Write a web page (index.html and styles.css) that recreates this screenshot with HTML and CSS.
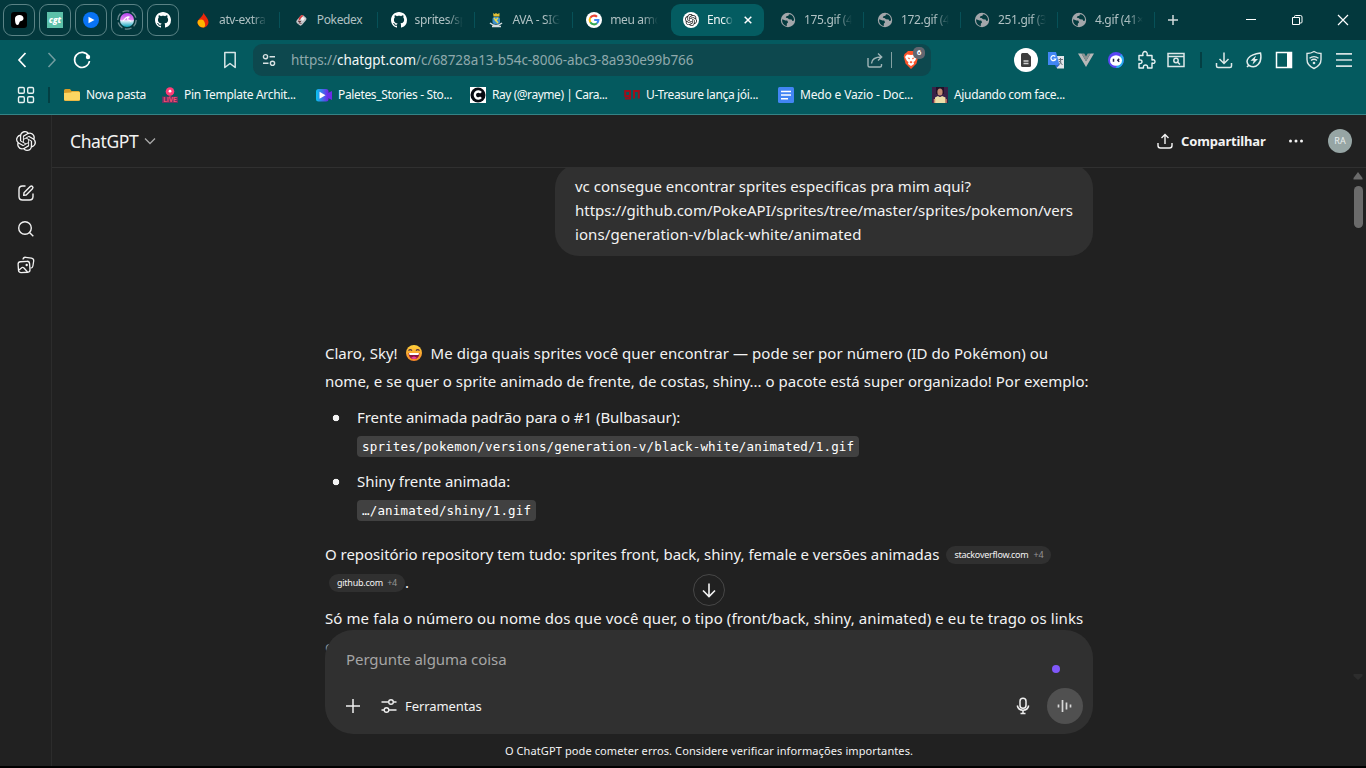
FILE: index.html
```html
<!DOCTYPE html>
<html lang="pt-BR">
<head>
<meta charset="utf-8">
<title>ChatGPT</title>
<link rel="stylesheet" href="styles.css">
</head>
<body>
<svg class="defs" width="0" height="0">
  <symbol id="openai" viewBox="0 0 24 24"><path fill="currentColor" d="M22.2819 9.8211a5.9847 5.9847 0 0 0-.5157-4.9108 6.0462 6.0462 0 0 0-6.5098-2.9A6.0651 6.0651 0 0 0 4.9807 4.1818a5.9847 5.9847 0 0 0-3.9977 2.9 6.0462 6.0462 0 0 0 .7427 7.0966 5.98 5.98 0 0 0 .511 4.9107 6.051 6.051 0 0 0 6.5146 2.9001A5.9847 5.9847 0 0 0 13.2599 24a6.0557 6.0557 0 0 0 5.7718-4.2058 5.9894 5.9894 0 0 0 3.9977-2.9001 6.0557 6.0557 0 0 0-.7475-7.0729zm-9.022 12.6081a4.4755 4.4755 0 0 1-2.8764-1.0408l.1419-.0804 4.7783-2.7582a.7948.7948 0 0 0 .3927-.6813v-6.7369l2.02 1.1686a.071.071 0 0 1 .038.052v5.5826a4.504 4.504 0 0 1-4.4945 4.4944zm-9.6607-4.1254a4.4708 4.4708 0 0 1-.5346-3.0137l.142.0852 4.783 2.7582a.7712.7712 0 0 0 .7806 0l5.8428-3.3685v2.3324a.0804.0804 0 0 1-.0332.0615L9.74 19.9502a4.4992 4.4992 0 0 1-6.1408-1.6464zM2.3408 7.8956a4.485 4.485 0 0 1 2.3655-1.9728V11.6a.7664.7664 0 0 0 .3879.6765l5.8144 3.3543-2.0201 1.1685a.0757.0757 0 0 1-.071 0l-4.8303-2.7865A4.504 4.504 0 0 1 2.3408 7.872zm16.5963 3.8558L13.1038 8.364 15.1192 7.2a.0757.0757 0 0 1 .071 0l4.8303 2.7913a4.4944 4.4944 0 0 1-.6765 8.1042v-5.6772a.79.79 0 0 0-.407-.667zm2.0107-3.0231l-.142-.0852-4.7735-2.7818a.7759.7759 0 0 0-.7854 0L9.409 9.2297V6.8974a.0662.0662 0 0 1 .0284-.0615l4.8303-2.7866a4.4992 4.4992 0 0 1 6.6802 4.66zM8.3065 12.863l-2.02-1.1638a.0804.0804 0 0 1-.038-.0567V6.0742a4.4992 4.4992 0 0 1 7.3757-3.4537l-.142.0805L8.704 5.459a.7948.7948 0 0 0-.3927.6813zm1.0976-2.3654l2.602-1.4998 2.6069 1.4998v2.9994l-2.5974 1.4997-2.6067-1.4997Z"/></symbol>
  <symbol id="github" viewBox="0 0 16 16"><path fill="#fff" d="M8 0C3.58 0 0 3.58 0 8c0 3.54 2.29 6.53 5.47 7.59.4.07.55-.17.55-.38 0-.19-.01-.82-.01-1.49-2.01.37-2.53-.49-2.69-.94-.09-.23-.48-.94-.82-1.13-.28-.15-.68-.52-.01-.53.63-.01 1.08.58 1.23.82.72 1.21 1.87.87 2.33.66.07-.52.28-.87.51-1.07-1.78-.2-3.64-.89-3.64-3.95 0-.87.31-1.59.82-2.15-.08-.2-.36-1.02.08-2.12 0 0 .67-.21 2.2.82.64-.18 1.32-.27 2-.27s1.36.09 2 .27c1.53-1.04 2.2-.82 2.2-.82.44 1.1.16 1.92.08 2.12.51.56.82 1.27.82 2.15 0 3.07-1.87 3.75-3.65 3.95.29.25.54.73.54 1.48 0 1.07-.01 1.93-.01 2.2 0 .21.15.46.55.38A8.01 8.01 0 0 0 16 8c0-4.42-3.58-8-8-8z"/></symbol>
  <symbol id="globe" viewBox="0 0 16 16"><circle cx="8" cy="8" r="7.2" fill="#a3a6aa"/><path fill="#033a3e" d="M2.2 7.2 5.4 8.6l1.8 0 .9 1.7-1.3 1.4 0 2.2C3.8 13.5 1.7 10.600 2.200 7.200zM9 2.200l-.6 1.500-2 .6-.6 1.500 1.700.2 1.500 1.300 2.600.2.8 1.500 1.600-.4C14.400 5.200 12.200 2.400 9 2.200z"/></symbol>
</svg>

<div class="tabstrip">
  <div class="pins">
    <div class="pin"><svg width="16" height="16"><rect width="16" height="16" rx="3" fill="#000"/><path fill="#fff" d="M4 6.500C4 4.500 6 3 8.500 3S12.500 4.500 12.500 6.500 10.500 9 9.300 9.300 8.500 13 6.500 13 4 9.500 4 6.500z"/></svg></div>
    <div class="pin"><span class="cgt">cgt</span></div>
    <div class="pin"><svg width="16" height="16"><circle cx="8" cy="8" r="8" fill="#0873f5"/><path fill="#fff" d="M5.500 4.700v6.600L11.500 8z"/></svg></div>
    <div class="pin"><svg width="20" height="20" viewBox="0 0 20 20"><defs><linearGradient id="orb" x2="0" y2="1"><stop offset="0" stop-color="#b445ef"/><stop offset=".5" stop-color="#e88cf2"/><stop offset=".55" stop-color="#e9f4ff"/><stop offset="1" stop-color="#08a3b8"/></linearGradient></defs><circle cx="10" cy="10" r="9.200" fill="none" stroke="#6d8d92" stroke-width="1.300" stroke-dasharray="7 2.600"/><circle cx="10" cy="10" r="7" fill="url(#orb)"/><path d="M6 11q4-5 6-4-2 1-1 3 2 0 3 1.500" fill="none" stroke="#fff" stroke-width="1.200"/></svg></div>
    <div class="pin"><svg width="16" height="16"><use href="#github"/></svg></div>
  </div>
  <div class="tabs">
    <div class="tab wide"><svg width="16" height="16"><path fill="#e8280b" d="M8.500.5C9 3 13.500 6 13.500 10.200A5.500 5.300 0 0 1 2.500 10.200C2.500 7 8.500 4.500 8.500.5z"/><path fill="#ffb400" d="M3 8.500Q8 6 9.500 10T9 15.500Q4 15.500 2.500 11z"/></svg><span class="t">atv-extra</span></div>
    <div class="tab wide"><svg width="16" height="16"><g transform="rotate(40 8 8)"><rect x="5" y="3" width="7" height="10" rx="2" fill="#c4c5c9"/><path d="M5 5.500q0-2.500 2-2.500v7L5 8z" fill="#d43d3d"/><rect x="7" y="4.500" width="3" height="3" fill="#f4f4f4"/><path d="M6.500 10.500h4M8.500 9v3" stroke="#5a2a30"/></g></svg><span class="t solid">Pokedex</span></div>
    <div class="tab wide"><svg width="16" height="16"><use href="#github"/></svg><span class="t">sprites/sprites</span></div>
    <div class="tab wide"><svg width="16" height="16"><path fill="#e0bd35" d="M5 1l1.500 1L8 1l1.500 1L11.500 1v3.500h-6z"/><rect x="4.500" y="5" width="7.500" height="7" rx="2" fill="#3d91cf"/><path d="M6 6l4 5M10 6 7 9" stroke="#e8da51" stroke-width="1.500"/><path d="M2 11q6 5 12 0M4 14.500h9" fill="none" stroke="#d5dde0" stroke-width="1.500"/></svg><span class="t">AVA - SIGAA</span></div>
    <div class="tab nosep"><svg width="16" height="16"><circle cx="8" cy="8" r="8" fill="#fff"/><g fill="none" stroke-width="2.100"><path stroke="#ea4335" d="M4.300 5.700A4.400 4.400 0 0 1 11 4.800"/><path stroke="#fbbc05" d="M4.300 5.700a4.400 4.400 0 0 0 0 4.600"/><path stroke="#34a853" d="M4.300 10.300A4.400 4.400 0 0 0 11 11.200"/><path stroke="#4285f4" d="M11 11.200A4.400 4.400 0 0 0 12.400 8H8.200"/></g></svg><span class="t">meu amor</span></div>
    <div class="tab active"><span class="oa"><svg width="12" height="12"><use href="#openai"/></svg></span><span class="t">Encontrar</span><svg class="x" width="8" height="8"><path d="M.7.7l6.600 6.600M7.300.7.700 7.300" stroke="#fff" stroke-width="1.500"/></svg></div>
    <div class="tab"><svg width="16" height="16"><use href="#globe"/></svg><span class="t">175.gif (41×)</span></div>
    <div class="tab"><svg width="16" height="16"><use href="#globe"/></svg><span class="t">172.gif (41×)</span></div>
    <div class="tab"><svg width="16" height="16"><use href="#globe"/></svg><span class="t">251.gif (36×)</span></div>
    <div class="tab"><svg width="16" height="16"><use href="#globe"/></svg><span class="t">4.gif (41×42)</span></div>
    <svg class="plus" width="12" height="12"><path d="M6 1v10M1 6h10" stroke="#d3dadb" stroke-width="1.500"/></svg>
  </div>
  <div class="winctl">
    <svg width="12" height="12"><path d="M1 5.500h10" stroke="#fff"/></svg>
    <svg width="12" height="12"><path d="M1.500 3.500h7v7h-7zM3.500 3.500V2.500q0-1 1-1h5q1.500 0 1.500 1.500v5q0 1-1 1H8.500" fill="none" stroke="#fff"/></svg>
    <svg width="12" height="12"><path d="M1 1l10 10M11 1 1 11" stroke="#fff" stroke-width="1.200"/></svg>
  </div>
</div>

<div class="toolbar">
  <div class="nav">
    <svg width="20" height="20"><path d="M13.500 3 7 10l6.500 7" fill="none" stroke="#fff" stroke-width="1.700"/></svg>
    <svg width="20" height="20"><path d="M6.500 3l6.500 7-6.500 7" fill="none" stroke="#729da0" stroke-width="1.500"/></svg>
    <svg width="20" height="20"><path d="M16.500 6A7.500 7.500 0 1 0 17.500 11" fill="none" stroke="#fff" stroke-width="1.600"/><circle cx="16" cy="7" r="2.200" fill="#fff"/></svg>
    <svg class="bm" width="20" height="20"><path d="M4.800 2.500h10.400v15L10 13.500l-5.200 4z" fill="none" stroke="#d9e6e7" stroke-width="1.500" stroke-linejoin="round"/></svg>
  </div>
  <div class="url">
    <svg width="14" height="14"><g fill="none" stroke="#d9e2e3" stroke-width="1.400"><circle cx="3.500" cy="3.700" r="2.100"/><path d="M7.500 3.700H13M1 10.300h5.500"/><circle cx="10.500" cy="10.300" r="2.100"/></g></svg>
    <span class="addr">https://<b>chatgpt.com</b>/c/68728a13-b54c-8006-abc3-8a930e99b766</span>
    <svg class="share" width="16" height="16"><path d="M1 6v7.500q0 1.500 1.500 1.500H13q1.500 0 1.500-1.500V12M4.500 11.500Q5 5 14.500 5M11 1.500 14.700 5 11 8.500" fill="none" stroke="#a0b5b7" stroke-width="1.400"/></svg>
    <i class="vline"></i>
    <span class="brave"><svg width="16" height="18" viewBox="0 0 16 18"><path fill="#fb542b" d="M3.500 1.500 5 0h6l1.500 1.500L14.500 3l.8 2.500-1.800 7L8 18l-5.500-5.500-1.800-7L1.500 3z"/><path fill="#fff" d="M4 3.500 8 4l4-.5L14 6l-2 4-1.500 1L11 13l-3 2-3-2 .5-2L4 10 2 6z"/><path fill="#fb542b" d="M4.500 6.500 7 7l-.8 1.500zM11.500 6.500 9 7l.8 1.500zM8 10l1.500 1L8 12.500 6.500 11z"/></svg><em class="badge">6</em></span>
  </div>
  <div class="exts">
    <svg width="24" height="24"><circle cx="12" cy="12" r="12" fill="#fff"/><path fill="#3d3d3d" d="M8.500 5h5L17 8.500V17.500q0 1.500-1.500 1.500h-7Q7 19 7 17.500v-11Q7 5 8.500 5z"/><path d="M9.500 13h5M9.500 15.500h5" stroke="#cfcfcf" stroke-width="1.400"/></svg>
    <svg width="18" height="18"><path fill="#e2e6ea" d="M8 5h9v12.500H10z"/><path fill="#4286f5" d="M1 1h8l3.500 13H1z"/><path fill="#3169d3" d="M8 14h4.500L9.500 17z"/><path d="M8.300 5.500A2.500 2.500 0 1 0 8.800 8H6.500" fill="none" stroke="#fff" stroke-width="1.200"/><path d="M11.500 8.500h4.500M13.500 7v1.500Q15 12 11.500 14M12 10l3.500 4" stroke="#626d76" fill="none"/></svg>
    <svg width="16" height="16"><path fill="#b8b8b8" d="M0 1.500h3.500L8 9.300l4.500-7.800H16L8 15z"/><path fill="#8c9393" d="M3.500 1.500H6.300L8 4.500l1.700-3h2.800L8 9.300z"/></svg>
    <svg width="16" height="16"><circle cx="8" cy="8" r="8" fill="#5a45f5"/><path fill="#24b1ed" d="M8 16A8 8 0 0 0 13 2z"/><ellipse cx="8" cy="8.500" rx="6" ry="5.300" fill="#fff"/><path d="M5.500 6.800v3M11.200 6.800 9.800 8.300l1.400 1.500" stroke="#24204c" stroke-width="1.500" fill="none"/></svg>
    <svg width="20" height="20"><path d="M3 5.500H7C6 2.500 8 1.500 9 1.500S12 2.500 11 5.500h5v4.500C18.500 9 19 11 19 11.800S18 14 16 13v5H11.500C12 15.500 10.500 15 9.500 15S7 15.500 7.500 18H3V13.500C5.500 14 6 12.500 6 11.700S5.500 9.500 3 10z" fill="none" stroke="#e9f3f3" stroke-width="1.400" stroke-linejoin="round"/></svg>
    <svg width="18" height="18"><path d="M1 2.500h16v13H1zM1 5.500h16" fill="none" stroke="#dce7e8" stroke-width="1.500"/><circle cx="9" cy="9.500" r="2.200" fill="none" stroke="#dce7e8" stroke-width="1.500"/><path d="M10.500 11l2.500 2.500" stroke="#dce7e8" stroke-width="1.500"/></svg>
  </div>
  <i class="dark-sep"></i>
  <div class="tools">
    <svg width="18" height="18"><path d="M9 1.500v10.500M4.500 8 9 12.500 13.500 8M1.500 12v3q0 1.500 1.500 1.500h12q1.500 0 1.500-1.500v-3" fill="none" stroke="#dfe9e9" stroke-width="1.500"/></svg>
    <svg width="18" height="18"><path d="M2 16 4 14M4 14.500C-.5 10 3 3.500 15.500 2 17.500 12 11 18.500 4 14.500z" fill="none" stroke="#e3eded" stroke-width="1.500"/><path fill="#e3eded" d="M11 4.500 5.500 9.700H8.700L7.500 13.500 13 8H9.800z"/></svg>
    <svg width="18" height="18"><path d="M1.500 1.500h15v15h-15z" fill="none" stroke="#fff" stroke-width="1.500"/><path fill="#fff" d="M12 1h5v16h-5z"/></svg>
    <svg width="18" height="20"><path d="M9 1.500q3 2 7 2v6q0 6-7 9-7-3-7-9v-6q4 0 7-2z" fill="none" stroke="#dfe9e9" stroke-width="1.400"/><path d="M4.500 8.300q4.500-3.500 9 0M6 10.500q3-2.500 6 0" fill="none" stroke="#dfe9e9" stroke-width="1.300"/><circle cx="9" cy="13" r="1.300" fill="#dfe9e9"/></svg>
    <svg width="16" height="16"><path d="M0 1.800h16M0 8h16M0 14.200h16" stroke="#d5e1e2" stroke-width="1.700"/></svg>
  </div>
</div>

<div class="bookmarks">
  <svg class="grid" width="18" height="18"><g fill="none" stroke="#e9f2f2" stroke-width="1.400"><rect x="1.500" y="1.500" width="5.800" height="5.800" rx="1.200"/><rect x="10.700" y="1.500" width="5.800" height="5.800" rx="1.200"/><rect x="1.500" y="10.700" width="5.800" height="5.800" rx="1.200"/><rect x="10.700" y="10.700" width="5.800" height="5.800" rx="1.200"/></g></svg>
  <i class="dark-sep"></i>
  <div class="mark first"><svg width="16" height="16"><path fill="#d89c26" d="M0 3.500Q0 2 1.500 2H6L7.500 4H14.500Q16 4 16 5.500V12.500Q16 14 14.500 14h-13Q0 14 0 12.500z"/><path fill="#fdd662" d="M0 6 7 5.500 8 4.800H14.700Q16 5 16 6V12.300Q16 13.500 14.700 13.500H1.300Q0 13.500 0 12.300z"/></svg><span class="b1">Nova pasta</span></div>
  <div class="mark"><svg width="16" height="16"><circle cx="8" cy="4.500" r="4.300" fill="#ff3d77"/><circle cx="8" cy="4.200" r="1.400" fill="#fff"/><path d="M8 9v2" stroke="#e63667" stroke-width="2"/><rect y="9.500" width="16" height="6.500" fill="#673563"/><text x="8" y="15.400" text-anchor="middle" font-family="Roboto" font-size="6.500" font-weight="700" fill="#ff4b6e">LIVE</text></svg><span class="b2">Pin Template Archit...</span></div>
  <div class="mark"><svg width="16" height="16"><defs><linearGradient id="vid"><stop stop-color="#08c5ef"/><stop offset="1" stop-color="#7221e6"/></linearGradient></defs><rect y="2" width="12.500" height="12.500" rx="2.500" fill="url(#vid)"/><path fill="#6b2ce7" d="M12 6l4-2v9l-4-2z"/><path fill="#fff" d="M3.500 4.700v7L9.500 8.200z"/></svg><span class="b3">Paletes_Stories - Sto...</span></div>
  <div class="mark"><svg width="16" height="16"><rect width="16" height="16" fill="#fff"/><circle cx="8" cy="8" r="7.500" fill="#080b12"/><path d="M11 5.700A3.500 3.500 0 1 0 11 10.300" fill="none" stroke="#fff" stroke-width="2.400"/></svg><span class="b4">Ray (@rayme) | Cara...</span></div>
  <div class="mark"><svg width="16" height="16"><path d="M5.500 9H1.200V4H6v7.500H1M10 11.500V4H14.800v7.500" fill="none" stroke="#9c101c" stroke-width="2"/></svg><span class="b5">U-Treasure lança jói...</span></div>
  <div class="mark"><svg width="16" height="16"><rect width="16" height="16" rx="1.500" fill="#4285f4"/><path d="M3 4.500h10M3 8h10M3 11.700h7" stroke="#fff" stroke-width="1.600"/></svg><span class="b6">Medo e Vazio - Doc...</span></div>
  <div class="mark"><svg width="16" height="16"><rect width="16" height="16" fill="#3a2147"/><path fill="#211128" d="M4 0h8v7H4z"/><ellipse cx="8" cy="5" rx="2.600" ry="3.500" fill="#c28c73"/><path fill="#ecdfa9" d="M3 16V10.500L6 9q2 2 4 0l3.500 1.500V16z"/><path d="M2.500 16v-4M14 16v-4" stroke="#cf8b6b" stroke-width="1.500"/></svg><span class="b7">Ajudando com face...</span></div>
</div>

<div class="app">
  <nav class="rail">
    <svg class="logo" width="20" height="20"><use href="#openai"/></svg>
    <svg width="18" height="18"><path d="M8.500 2H5.500Q2 2 2 5.500v7Q2 16 5.500 16h7Q16 16 16 12.500V9.500M6.700 11.300 7 8.800 13.200 2.600Q14.500 1.500 15.500 2.500T15.400 4.800L9.200 11z" fill="none" stroke="#f1f1f1" stroke-width="1.400" stroke-linejoin="round"/></svg>
    <svg width="18" height="18"><circle cx="8" cy="8" r="6.300" fill="none" stroke="#f1f1f1" stroke-width="1.400"/><path d="M12.500 12.500 16.300 16.300" stroke="#f1f1f1" stroke-width="1.400"/></svg>
    <svg width="18" height="18"><g fill="none" stroke="#f1f1f1" stroke-width="1.300"><path d="M6 3.500Q6.400 1 8.700 1.300L14.500 2.200Q17 2.600 16.700 5L15.900 10Q15.600 12 13.500 12.200"/><rect x="1.300" y="5.500" width="11.500" height="11" rx="2.500" transform="rotate(-4 7 11)"/><path d="M2 14 5 11.500Q6 11 7 12L10.500 16"/></g><circle cx="9.700" cy="9" r="1.200" fill="#f1f1f1"/></svg>
  </nav>
  <main class="main">
    <header class="head">
      <span class="title">ChatGPT</span>
      <svg class="chev" width="12" height="12"><path d="M1 3.500l5 5 5-5" fill="none" stroke="#a8a8a8" stroke-width="1.300"/></svg>
      <svg class="up" width="16" height="16"><path d="M8 11V1.500M4.500 5 8 1.500 11.500 5M1 10v2.500Q1 15 3.500 15h9Q15 15 15 12.500V10" fill="none" stroke="#f5f5f5" stroke-width="1.400"/></svg>
      <span class="sharetxt">Compartilhar</span>
      <svg class="dots" width="16" height="16"><g fill="#f3f3f3"><circle cx="2.500" cy="8" r="1.500"/><circle cx="8" cy="8" r="1.500"/><circle cx="13.500" cy="8" r="1.500"/></g></svg>
      <span class="avatar">RA</span>
    </header>
    <div class="scroll">
      <div class="column">
        <div class="bubble"><p class="u1">vc consegue encontrar sprites especificas pra mim aqui?</p><p class="u2">https://github.com/PokeAPI/sprites/tree/master/sprites/pokemon/vers</p><p class="u3">ions/generation-v/black-white/animated</p></div>
        <article class="reply">
          <p class="l1">Claro, Sky! <svg class="emoji" width="18" height="18" viewBox="0 0 18 18"><defs><linearGradient id="face" x2="0" y2="1"><stop stop-color="#ffd13b"/><stop offset="1" stop-color="#f58427"/></linearGradient></defs><circle cx="9" cy="9" r="8" fill="url(#face)"/><path d="M3.500 6.700Q5.200 4.500 7 6.700M11 6.700Q12.700 4.500 14.500 6.700" fill="none" stroke="#533442" stroke-width="1.200"/><path fill="#8b163f" d="M3.500 9h11Q14 15 9 15T3.500 9z"/><path fill="#fff" d="M4 9h10l-.5 2h-9z"/><path fill="#ee3f9b" d="M6 14q3-3 6 0-3 2-6 0z"/></svg> <span class="l1b">Me diga quais sprites você quer encontrar — pode ser por número (ID do Pokémon) ou</span></p>
          <p class="l2">nome, e se quer o sprite animado de frente, de costas, shiny... o pacote está super organizado! Por exemplo:</p>
          <ul>
            <li><span class="l3">Frente animada padrão para o #1 (Bulbasaur):</span><div class="cl"><code>sprites/pokemon/versions/generation-v/black-white/animated/1.gif</code></div></li>
            <li><span class="l4">Shiny frente animada:</span><div class="cl"><code>…/animated/shiny/1.gif</code></div></li>
          </ul>
          <div class="row"><span class="l5">O repositório repository tem tudo: sprites front, back, shiny, female e versões animadas</span><span class="cite c1"><span>stackoverflow.com</span><i>+4</i></span></div>
          <div class="row second"><span class="cite c2"><span>github.com</span><i>+4</i></span><span>.</span></div>
          <p class="l6">Só me fala o número ou nome dos que você quer, o tipo (front/back, shiny, animated) e eu te trago os links</p>
          <p class="l7">c</p>
        </article>
      </div>
      <div class="bar"><svg width="10" height="8"><path fill="#6b6b6b" d="M5 0l4.500 6v1.500h-9V6z"/></svg><i class="thumb"></i><svg class="downtri" width="10" height="8"><path fill="#2d2d2d" d="M5 7 .5 3V1h9v2z"/></svg></div>
      <div class="godown"><svg width="16" height="16"><path d="M8 1.500v13M2 8.500l6 6 6-6" fill="none" stroke="#f5f5f5" stroke-width="1.600"/></svg></div>
      <footer class="dock">
        <div class="composer">
          <div class="ask">Pergunte alguma coisa</div>
          <i class="purple"></i>
          <div class="acts">
            <svg width="16" height="16"><path d="M8 1v14M1 8h14" stroke="#eee" stroke-width="1.500"/></svg>
            <svg class="sl" width="16" height="16"><g fill="none" stroke="#eee" stroke-width="1.400"><path d="M.5 4h7M12.500 4h3M.5 12h2.500M8 12h7.500"/><circle cx="10" cy="4" r="2.300"/><circle cx="5.500" cy="12" r="2.300"/></g></svg>
            <span class="ferr">Ferramentas</span>
            <svg class="mic" width="16" height="18"><g fill="none" stroke="#eee" stroke-width="1.500"><rect x="5" y="1.200" width="6" height="10" rx="3"/><path d="M2.300 8.500a5.800 5.800 0 0 0 11.400 0M8 13.500v3M5.500 16.500h5"/></g></svg>
            <span class="voice"><svg width="16" height="16"><path d="M1.500 6.500v3M5.500 2v12M9.500 4.500v7M13.500 6.500v3" stroke="#d8d8d8" stroke-width="1.700"/></svg></span>
          </div>
        </div>
        <div class="note">O ChatGPT pode cometer erros. Considere verificar informações importantes.</div>
      </footer>
    </div>
  </main>
</div>
</body>
</html>
```
FILE: styles.css
```css
* { box-sizing: border-box; }
body { margin: 0; width: 1366px; height: 768px; overflow: hidden; background: #000; color: #f3f3f3; font: 15px/28px "Noto Sans", sans-serif; display: flex; flex-direction: column; }
p, ul { margin: 0; padding: 0; }
svg { flex: none; display: block; }
.defs { position: absolute; }

.tabstrip { height: 40px; flex: none; background: #03383d; display: flex; align-items: center; font-size: 12px; line-height: 16px; color: #b0c1c3; }
.pins { display: flex; gap: 4px; padding-left: 3px; width: 182px; flex: none; }
.pin { width: 32px; height: 32px; border: 1px solid #5a8285; border-radius: 9px; display: flex; align-items: center; justify-content: center; }
.cgt { width: 16px; height: 16px; background: #5cc0a9; color: #fff; font: italic 800 8px/15px "Open Sans", sans-serif; text-align: center; }
.tabs { display: flex; align-items: center; flex: 1; }
.tab { width: 97px; height: 16px; flex: none; padding-left: 13px; display: flex; align-items: center; gap: 8px; border-right: 1px solid #075158; }
.tab.wide { width: 97.8px; }
.tab.nosep { border-color: transparent; width: 97.8px; }
.t { width: 48px; height: 16px; overflow: hidden; white-space: nowrap; letter-spacing: -.35px; -webkit-mask-image: linear-gradient(90deg, #000 68%, transparent); mask-image: linear-gradient(90deg, #000 68%, transparent); }
.t.solid { -webkit-mask-image: none; mask-image: none; }
.active { height: 32px; width: 93px; padding-left: 12px; margin-right: 3px; border: 0; border-radius: 9px; background: #045c61; color: #eef5f5; }
.active .t { width: 26px; }
.oa { width: 16px; height: 16px; border-radius: 50%; background: #fff; color: #222; display: flex; align-items: center; justify-content: center; flex: none; }
.x { margin-left: 3px; }
.plus { margin-left: 12px; }
.winctl { display: flex; gap: 34px; padding-right: 17px; }

.toolbar { height: 40px; flex: none; background: #045a5f; display: flex; align-items: center; }
.nav { width: 253px; display: flex; align-items: center; padding-left: 12px; gap: 10px; flex: none; }
.nav .bm { margin-left: 118px; }
.url { width: 678px; height: 32px; border-radius: 9px; background: #0d484e; display: flex; align-items: center; padding-left: 9px; flex: none; }
.addr { margin-left: 15px; font-size: 13.5px; line-height: 20px; letter-spacing: -.06px; color: #8fa9ac; white-space: nowrap; width: 575px; }
.addr b { font-weight: 400; color: #f4f8f8; }
.share { margin-left: 1px; }
.vline { width: 1px; height: 16px; background: #84a0a2; margin-left: 8px; }
.brave { position: relative; margin-left: 11px; }
.badge { position: absolute; left: 10px; top: -4px; width: 12px; height: 12px; border-radius: 5px; background: #63666f; color: #fff; font: 700 8px/12px Roboto, sans-serif; text-align: center; }
.exts { width: 269px; padding-left: 83px; display: grid; grid-template-columns: 24px 36px 24px 36px 24px 36px; justify-items: center; align-items: center; flex: none; }
.dark-sep { width: 2px; height: 16px; background: #033f43; flex: none; }
.tools { flex: 1; display: grid; grid-template-columns: repeat(5, 30px); justify-items: center; align-items: center; padding-left: 7px; }

.bookmarks { height: 35px; flex: none; background: #045a5f; border-bottom: 1px solid #348386; display: flex; align-items: center; padding: 0 0 5px 17px; font-size: 12px; line-height: 16px; color: #f5f9f9; }
.bookmarks .dark-sep { margin: 0 14px 0 13px; }
.mark { width: 154px; flex: none; display: flex; align-items: center; gap: 6px; white-space: nowrap; }
.first { width: 98px; }
.b1 { letter-spacing: -.3px; }
.b2 { letter-spacing: -.32px; }
.b3 { letter-spacing: -.36px; }
.b4 { letter-spacing: -.45px; }
.b5 { letter-spacing: -.35px; }
.b6 { letter-spacing: -.16px; }
.b7 { letter-spacing: -.35px; }

.app { height: 651px; flex: none; background: #212121; display: flex; }
.rail { width: 52px; border-right: 1px solid #2c2c2c; display: flex; flex-direction: column; align-items: center; padding-top: 16px; gap: 18px; }
.logo { margin-bottom: 15px; color: #f5f5f5; }
.main { flex: 1; min-width: 0; display: flex; flex-direction: column; }
.head { height: 53px; flex: none; border-bottom: 1px solid #303030; display: flex; align-items: center; padding-left: 18px; }
.title { font-size: 17.5px; letter-spacing: -.4px; width: 69px; white-space: nowrap; }
.chev { margin-left: 5px; }
.up { margin-left: 1001px; }
.sharetxt { margin-left: 8px; width: 85px; font-size: 13px; font-weight: 700; letter-spacing: -.15px; white-space: nowrap; }
.dots { margin-left: 22px; }
.avatar { margin-left: 24px; width: 24px; height: 24px; border-radius: 50%; background: #96a5a4; color: #e9eeee; font: 9px/24px "Noto Sans", sans-serif; text-align: center; }
.scroll { flex: 1; position: relative; overflow: hidden; }
.column { width: 768px; margin-left: 273px; margin-top: -4px; display: flex; flex-direction: column; white-space: nowrap; }
.bubble { align-self: flex-end; width: 538px; height: 92px; padding: 10px 20px; background: #303030; border-radius: 24px; line-height: 24px; }
.u2 { letter-spacing: -.02px; }
.u3 { letter-spacing: .08px; }
.reply { margin-top: 83px; }
.l1 { display: flex; }
.l1b { letter-spacing: .05px; }
.l2 { letter-spacing: .01px; }
.l3 { letter-spacing: -.03px; }
.l4 { letter-spacing: -.06px; }
.l5 { letter-spacing: -.025px; }
.l6 { letter-spacing: .092px; }
.l7 { color: #8d8d8d; }
.emoji { margin: 5px 8px 0 7px; }
ul { list-style: none; margin-top: 8px; }
li { padding-left: 32px; height: 64px; background: radial-gradient(circle at 11px 15px, #f3f3f3 2.900px, transparent 3.600px) no-repeat; }
li > span { display: block; height: 28px; }
.cl { display: flex; padding-top: 5px; }
code { height: 21px; padding: 0 5px; border-radius: 4px; background: #414141; font: 500 12.5px/21px "DejaVu Sans Mono", monospace; letter-spacing: .165px; color: #fff; }
.row { display: flex; height: 28px; align-items: center; margin-top: 9px; }
.row.second { margin: 0 0 8px 4px; }
.cite { height: 18px; border-radius: 9px; background: #303030; padding: 0 8px; font-size: 9px; line-height: 18px; letter-spacing: -.25px; position: relative; top: 1px; display: flex; justify-content: space-between; }
.cite i { font-style: normal; color: #959595; }
.c1 { width: 105px; margin-left: 7px; }
.c2 { width: 76px; }
.bar { position: absolute; right: 3px; top: 4px; width: 10px; display: flex; flex-direction: column; align-items: center; }
.thumb { width: 9px; height: 42px; border-radius: 5px; background: #6b6b6b; margin-top: 6px; }
.downtri { margin-top: 445px; }
.godown { position: absolute; left: 641px; top: 406px; width: 32px; height: 32px; border-radius: 50%; border: 1px solid #474747; background: #212121; display: flex; align-items: center; justify-content: center; }
.dock { position: absolute; left: 273px; top: 462px; width: 768px; height: 136px; }
.composer { position: relative; height: 104px; border-radius: 28px; background: #303030; padding: 15px 10px 0 21px; }
.ask { color: #a5a5a5; height: 28px; letter-spacing: -.07px; }
.purple { position: absolute; right: 33px; top: 35px; width: 8px; height: 8px; border-radius: 50%; background: #8058fa; }
.acts { display: flex; align-items: center; margin-top: 15px; height: 36px; }
.acts > svg:first-child { margin-left: -1px; }
.sl { margin-left: 20px; }
.ferr { font-size: 13px; letter-spacing: -.08px; margin-left: 8px; width: 77px; }
.mic { margin-left: 533px; }
.voice { width: 36px; height: 36px; border-radius: 50%; background: #505050; display: flex; align-items: center; justify-content: center; margin-left: 16px; }
.note { height: 32px; background: #212121; font-size: 11px; line-height: 33px; letter-spacing: .107px; text-align: center; }
```
